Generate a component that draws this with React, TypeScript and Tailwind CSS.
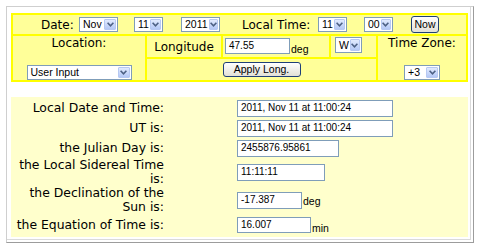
const V = "font-['DejaVu_Sans',Verdana,sans-serif]";
const A = "font-['Liberation_Sans',Arial,sans-serif]";

function Sel({ value, className }: { value: string; className: string }) {
  return (
    <div className={`flex items-stretch border border-[#7f9db9] bg-white text-[10.5px] text-black ${A} ${className}`}>
      <span className="flex flex-1 items-center pl-[3px] leading-none">{value}</span>
      <span className="m-px flex w-[12px] items-center justify-center rounded-[1px] border border-[#b7c9f2] bg-gradient-to-b from-[#e2ebfe] to-[#b4c8f6]">
        <svg width="7" height="5" viewBox="0 0 7 5">
          <path d="M0.6 0.8 L3.5 3.8 L6.4 0.8" stroke="#4d6185" strokeWidth="1.6" fill="none" />
        </svg>
      </span>
    </div>
  );
}

function Btn({ label, className }: { label: string; className: string }) {
  return (
    <button className={`flex items-center justify-center rounded-[3px] border border-[#1e3f78] bg-gradient-to-b from-white to-[#e2e0d6] text-[10.5px] leading-none text-black ${A} ${className}`}>
      {label}
    </button>
  );
}

function Field({ value, className }: { value: string; className: string }) {
  return (
    <div className={`flex items-center border border-[#7f9db9] bg-white pl-[3px] text-[10px] leading-none text-black ${A} ${className}`}>
      {value}
    </div>
  );
}

const cell = "bg-[#ffff99]";

function Row({ label, h, children }: { label: React.ReactNode; h: string; children: React.ReactNode }) {
  return (
    <div className={`flex items-center ${h}`}>
      <div className="w-[156px] pr-[3px] text-right text-[12.4px] leading-[14px]">{label}</div>
      <div className="ml-[70px] flex items-end">{children}</div>
    </div>
  );
}

export default function App() {
  return (
    <div className={`h-[247px] w-[480px] bg-white pl-[6px] pt-[6px] text-black ${V}`}>
      <div className="h-[237px] w-[468px] border border-[#cfcfcf] border-b-[#9c9c9c] border-r-[#9c9c9c] pl-[4px] pt-[6px] shadow-[inset_-2px_-2px_0_#fff,inset_-3px_-3px_0_#dadada]">
        {/* settings table */}
        <div className="flex w-[457px] flex-col gap-[2px] bg-[#ffff00] p-[2px] text-[12px]">
          <div className={`flex h-[19px] items-center ${cell}`}>
            <span className="ml-[28px] w-[33px] whitespace-nowrap">Date:</span>
            <Sel value="Nov" className="ml-[5px] h-[15px] w-[39px]" />
            <Sel value="11" className="ml-[16px] h-[15px] w-[29px]" />
            <Sel value="2011" className="ml-[18px] h-[15px] w-[39px]" />
            <span className="ml-[22px] w-[70px] whitespace-nowrap">Local Time:</span>
            <Sel value="11" className="ml-[6px] h-[15px] w-[29px]" />
            <Sel value="00" className="ml-[17px] h-[15px] w-[29px]" />
            <Btn label="Now" className="ml-[18px] -mt-px h-[17px] w-[28px]" />
          </div>
          <div className="grid h-[44px] grid-cols-[132px_229px_88px] gap-[2px]">
            <div className={`flex flex-col items-center justify-between ${cell}`}>
              <span className="leading-[14px]">Location:</span>
              <Sel value="User Input" className="h-[15px] w-[105px]" />
            </div>
            <div className="grid grid-cols-[74px_106px_45px] grid-rows-[21px_21px] gap-[2px]">
              <div className={`flex items-center justify-center ${cell}`}>Longitude</div>
              <div className={`flex items-end pb-[3px] pl-[2px] ${cell}`}>
                <Field value="47.55" className="h-[16px] w-[65px]" />
                <span className={`pl-px text-[10.5px] leading-none ${A}`}>deg</span>
              </div>
              <div className={`pl-[4px] pt-px ${cell}`}>
                <Sel value="W" className="h-[16px] w-[27px]" />
              </div>
              <div className={`col-span-3 flex items-center justify-center ${cell}`}>
                <Btn label="Apply Long." className="h-[15px] w-[78px]" />
              </div>
            </div>
            <div className={`flex flex-col items-center justify-between ${cell}`}>
              <span className="leading-[14px]">Time Zone:</span>
              <Sel value="+3" className="h-[15px] w-[36px]" />
            </div>
          </div>
        </div>

        {/* results */}
        <div className="mt-[15px] flex w-[457px] flex-col bg-[#ffffcc] py-px">
          <Row label="Local Date and Time:" h="h-[20px]">
            <Field value="2011, Nov 11 at 11:00:24" className="h-[17px] w-[156px]" />
          </Row>
          <Row label="UT is:" h="h-[20px]">
            <Field value="2011, Nov 11 at 11:00:24" className="h-[17px] w-[156px]" />
          </Row>
          <Row label="the Julian Day is:" h="h-[20px]">
            <Field value="2455876.95861" className="h-[17px] w-[102px]" />
          </Row>
          <Row label="the Local Sidereal Time is:" h="h-[28px]">
            <Field value="11:11:11" className="h-[17px] w-[88px]" />
          </Row>
          <Row label="the Declination of the Sun is:" h="h-[28px]">
            <Field value="-17.387" className="h-[17px] w-[65px]" />
            <span className={`pb-[2px] pl-px text-[10.5px] leading-none ${A}`}>deg</span>
          </Row>
          <Row label="the Equation of Time is:" h="h-[22px]">
            <Field value="16.007" className="h-[16px] w-[74px]" />
            <span className={`pl-px text-[10.5px] leading-none ${A}`}>min</span>
          </Row>
        </div>
      </div>
    </div>
  );
}
